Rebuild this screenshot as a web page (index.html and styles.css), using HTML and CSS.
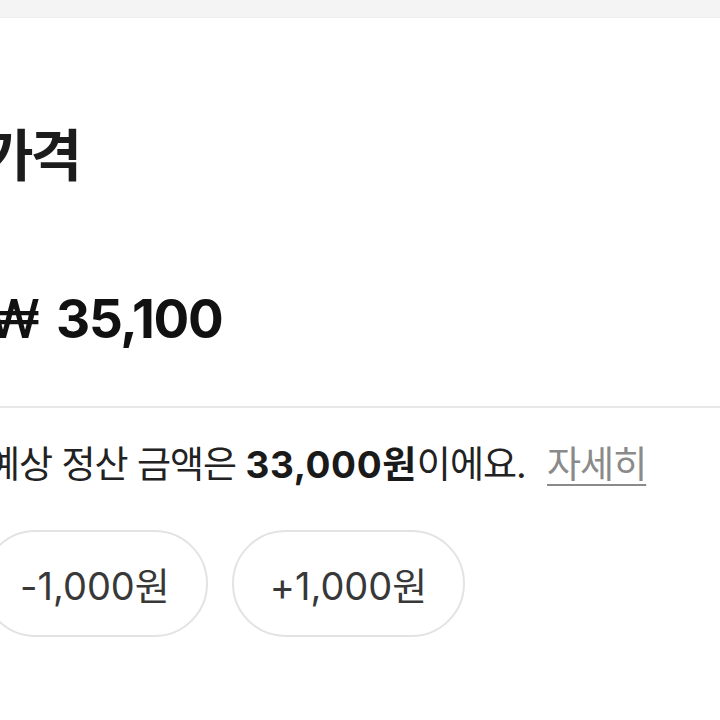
FILE: index.html
```html
<!DOCTYPE html>
<html lang="ko">
<head>
<meta charset="utf-8">
<title>가격</title>
<link rel="stylesheet" href="styles.css">
</head>
<body>
<div class="topbar"></div>
<main class="sheet">
  <h1 class="title">가격</h1>
  <div class="price"><span class="won">₩</span><span class="amount">35,100</span></div>
  <hr class="divider">
  <p class="note">예상 정산 금액은 <strong>33,000원</strong>이에요. <a class="more" href="#">자세히</a></p>
  <div class="chips">
    <button class="chip" type="button">-1,000원</button>
    <button class="chip" type="button">+1,000원</button>
  </div>
</main>
</body>
</html>
```
FILE: styles.css
```css
html, body {
  margin: 0;
  padding: 0;
  background: #ffffff;
  overflow: hidden;
}
body {
  width: 720px;
  height: 720px;
  font-family: Inter, "Noto Sans CJK KR", sans-serif;
  color: #1a1a1a;
}
.topbar {
  height: 17px;
  background: #f4f4f4;
  border-bottom: 1px solid #efefef;
}
.sheet {
  display: flex;
  flex-direction: column;
}
.title {
  margin: 105px 0 0 -18px;
  font-size: 56px;
  line-height: 66px;
  font-weight: 700;
  letter-spacing: -3px;
  color: #1c1c1c;
}
.price {
  margin: 100px 0 0 -12px;
  display: flex;
  align-items: baseline;
  gap: 16px;
  font-size: 53px;
  line-height: 60px;
  font-weight: 700;
  color: #111;
}
.won {
  font-weight: 500;
}
.amount {
  letter-spacing: -1.3px;
}
.divider {
  margin: 57px 0 0 0;
  border: 0;
  height: 2px;
  background: #e8e8e8;
  width: 720px;
}
.note {
  margin: 32px 0 0 -14px;
  font-size: 37px;
  line-height: 50px;
  color: #222;
  letter-spacing: -1px;
  white-space: nowrap;
}
.note strong {
  font-weight: 700;
  color: #1a1a1a;
  letter-spacing: 0.6px;
}
.more {
  margin-left: 12px;
  color: #8a8a8a;
  text-decoration: underline;
  text-decoration-thickness: 2px;
  text-underline-offset: 6px;
}
.chips {
  margin: 40px 0 0 -18px;
  display: flex;
  gap: 24px;
}
.chip {
  height: 107px;
  padding: 0 36px;
  border: 2px solid #e3e3e3;
  border-radius: 54px;
  background: #fff;
  font-family: Inter, "Noto Sans CJK KR", sans-serif;
  font-size: 38px;
  color: #383838;
  letter-spacing: 0;
}
```
